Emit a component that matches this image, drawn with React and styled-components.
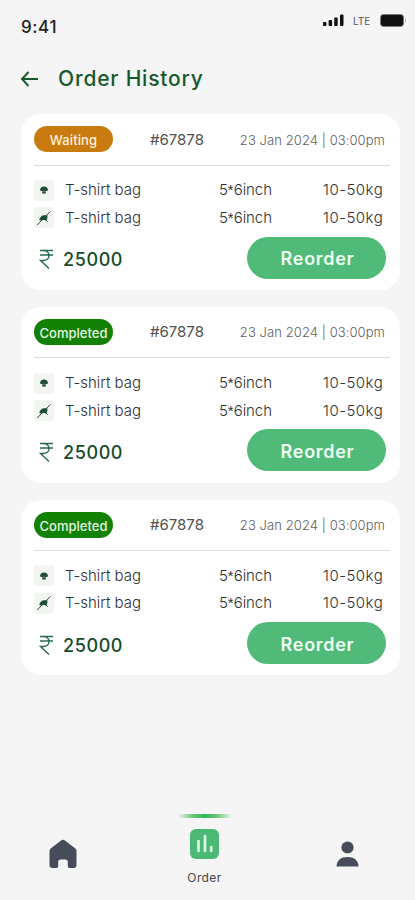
import React from "react";
import styled, { createGlobalStyle } from "styled-components";

const GlobalStyle = createGlobalStyle`
  * { box-sizing: border-box; }
  body { margin: 0; background: #f5f5f5; }
`;

const Screen = styled.div`
  display: flex;
  flex-direction: column;
  width: 415px;
  height: 900px;
  overflow: hidden;
  background: #f5f5f5;
  color: #444;
  font-family: Inter, "Liberation Sans", sans-serif;
  white-space: nowrap;
`;

const StatusBar = styled.header`
  display: flex;
  justify-content: space-between;
  height: 54px;
  padding: 0 8px 0 21px;
`;

const Clock = styled.time`
  padding-top: 17px;
  font-size: 17px;
  line-height: 21px;
  font-weight: 500;
  letter-spacing: 0.6px;
  color: #222;
`;

const StatusIcons = styled.div`
  display: flex;
  align-items: center;
  height: 14px;
  margin-top: 13px;
`;

const Network = styled.span`
  margin: 1px 9px 0 9px;
  width: 18px;
  font-size: 10px;
  line-height: 12px;
  color: #555;
`;

const TitleBar = styled.div`
  display: flex;
  align-items: center;
  height: 50px;
  padding-left: 20px;
`;

const BackButton = styled.button`
  display: flex;
  width: 20px;
  margin-right: 18px;
  padding: 0;
  border: 0;
  background: none;
`;

const Title = styled.h1`
  margin: 0;
  font-size: 21px;
  line-height: 28px;
  font-weight: 500;
  letter-spacing: 0.8px;
  color: #17592b;
`;

const Orders = styled.main`
  display: flex;
  flex-direction: column;
  gap: 17px;
  padding: 10px 15px 0 21px;
`;

const Card = styled.article`
  height: 175.8px;
  padding: 12px 13px 0;
  border-radius: 20px;
  background: #fff;
`;

const CardHeader = styled.div`
  display: grid;
  grid-template-columns: 79px 90px 1fr;
  align-items: center;
  height: 39.500px;
  margin-right: -3px;
  padding-bottom: 12.500px;
  border-bottom: 1px solid #dedede;
`;

const Badge = styled.span`
  display: flex;
  align-items: center;
  justify-content: center;
  height: 26px;
  padding-top: 2px;
  border-radius: 13px;
  font-size: 13px;
  font-weight: 500;
  letter-spacing: ${({ $done }) => ($done ? "0" : "0.1px")};
  color: ${({ $done }) => ($done ? "#e2f4e2" : "#fff0dc")};
  background: ${({ $done }) => ($done ? "#138006" : "#ca7b10")};
`;

const OrderNumber = styled.span`
  padding-left: 37px;
  font-size: 15px;
  color: #505050;
`;

const OrderDate = styled.time`
  justify-self: end;
  margin-right: 5px;
  padding-top: 1px;
  font-size: 13px;
  font-weight: 300;
  letter-spacing: 0.08px;
  color: #606060;
`;

const Items = styled.div`
  display: grid;
  grid-auto-rows: 27.5px;
  padding: 11px 2px 0 0;
`;

const Item = styled.div`
  display: grid;
  grid-template-columns: 31px 154px 1fr 62px;
  align-items: center;
  font-size: 15px;
  font-weight: 300;
  line-height: 20px;
  color: #303030;
`;

const Thumb = styled.span`
  display: flex;
  align-items: center;
  justify-content: center;
  width: 20px;
  height: 21px;
  border-radius: 3px;
  background: #f1f7f0;
`;

const Dimensions = styled.span`
  letter-spacing: -0.05px;
`;

const Times = styled.span`
  font-family: "Liberation Sans", sans-serif;
`;

const Weight = styled.span`
  letter-spacing: 0.5px;
`;

const CardFooter = styled.div`
  display: flex;
  align-items: center;
  justify-content: space-between;
  height: 42px;
  margin-top: 5px;
  padding-right: 1px;
`;

const Price = styled.div`
  display: flex;
  align-items: center;
  gap: 9px;
  padding: 4px 0 0 5px;
  font-size: 18px;
  font-weight: 500;
  letter-spacing: 0.6px;
  color: #174b2b;
`;

const ReorderButton = styled.button`
  width: 139px;
  height: 42px;
  padding: 3px 0 0 2px;
  border: 0;
  border-radius: 21px;
  background: #50bb78;
  color: #f0fff4;
  font: 600 18px/24px Inter, sans-serif;
  letter-spacing: 0.7px;
`;

const Navigation = styled.nav`
  display: grid;
  grid-template-columns: 125px 159px 127px;
  height: 88px;
  margin-top: auto;
`;

const NavItem = styled.a`
  display: flex;
  flex-direction: column;
  align-items: center;
  padding-top: ${({ $top }) => $top}px;
`;

const ActiveLine = styled.span`
  width: 54px;
  height: 4px;
  margin-bottom: 11px;
  border-radius: 2px;
  background: linear-gradient(90deg, transparent, #69c878 28%, #2fb652 50%, #69c878 72%, transparent);
`;

const NavLabel = styled.span`
  margin-top: 11px;
  font-size: 12px;
  line-height: 15px;
  letter-spacing: 0.4px;
  color: #444;
`;

function Signal() {
  return (
    <svg width="21" height="12" viewBox="0 0 21 12" fill="#111">
      <rect x="0" y="8" width="3.5" height="4" rx="1" />
      <rect x="5.6" y="6" width="3.5" height="6" rx="1" />
      <rect x="11.2" y="3.4" width="3.5" height="8.6" rx="1" />
      <rect x="17" y="0.5" width="3.5" height="11.5" rx="1" />
    </svg>
  );
}

function Battery() {
  return (
    <svg width="27" height="13" viewBox="0 0 27 13">
      <rect x="0.5" y="0.5" width="23" height="12" rx="3" fill="#111" stroke="#777" strokeWidth="0.8" />
      <path d="M25 4.5q2 2 0 4z" fill="#aaa" />
    </svg>
  );
}

function BackArrow() {
  return (
    <svg width="20" height="18" viewBox="0 0 20 18" fill="none" stroke="#17592b" strokeWidth="1.9">
      <path d="M18 9H2M8.5 2 2 9l6.5 7" />
    </svg>
  );
}

function Leaf({ crossed }) {
  return crossed ? (
    <svg width="16" height="16" viewBox="0 0 16 16">
      <path d="M3.5 10.5c0-4 3-6 8-5-.3 2 .2 4-1.6 5C7.7 9.6 6 10 3.5 10.5Z" fill="#164d37" />
      <path d="M1.2 15 14.4 1.4" stroke="#34463c" strokeWidth="1" />
      <path d="m9.5 9.6 2 2" stroke="#164d37" />
    </svg>
  ) : (
    <svg width="12" height="10" viewBox="0 0 12 10">
      <path d="M2 5.4C2 3 3.6 1.5 6 1.5S10 3 10 5.4L7.5 6.2 8 8.5H4L4.5 6.2Z" fill="#204b38" />
      <path d="m4.8 6.7 1.2-.8 1.2.8" fill="none" stroke="#cfe1d3" strokeWidth="0.5" />
    </svg>
  );
}

function Rupee() {
  return (
    <svg width="15" height="21" viewBox="0 0 15 21" fill="none" stroke="#28694a" strokeWidth="1.4">
      <path d="M1 1.5h13M1 6h13M4 1.5c8 0 8 10 0 10H1.5l8.5 8" />
    </svg>
  );
}

function Home() {
  return (
    <svg width="28" height="30" viewBox="0 0 28 30">
      <path d="M12 1.5q2-1.6 4 0l10 7.8q1.5 1.2 1.5 3V26q0 3-3 3h-4q-1.7 0-1.7-1.7V23q0-2.500-2.500-2.500h-4.600q-2.500 0-2.500 2.500v4.300Q9.200 29 7.500 29h-4q-3 0-3-3V12.300q0-1.800 1.500-3Z" fill="#474c5a" />
    </svg>
  );
}

function Chart() {
  return (
    <svg width="29" height="30" viewBox="0 0 29 30">
      <rect width="29" height="30" rx="6" fill="#4bb974" />
      <path d="M8.500 12v10M15 7v15M21.200 18v4" stroke="#ddf5e3" strokeWidth="2.7" strokeLinecap="round" />
    </svg>
  );
}

function Profile() {
  return (
    <svg width="23" height="27" viewBox="0 0 23 27" fill="#474c5a">
      <circle cx="11.500" cy="6.500" r="6.100" />
      <path d="M.5 25.500C.8 19 5 16 11.500 16S22.200 19 22.500 25.500Z" />
    </svg>
  );
}

function OrderCard({ done }) {
  return (
    <Card>
      <CardHeader>
        <Badge $done={done}>{done ? "Completed" : "Waiting"}</Badge>
        <OrderNumber>#67878</OrderNumber>
        <OrderDate>23 Jan 2024 | 03:00pm</OrderDate>
      </CardHeader>
      <Items>
        {[false, true].map((crossed) => (
          <Item key={String(crossed)}>
            <Thumb><Leaf crossed={crossed} /></Thumb>
            <span>T-shirt bag</span>
            <Dimensions>5<Times>*</Times>6inch</Dimensions>
            <Weight>10-50kg</Weight>
          </Item>
        ))}
      </Items>
      <CardFooter>
        <Price><Rupee /><span>25000</span></Price>
        <ReorderButton>Reorder</ReorderButton>
      </CardFooter>
    </Card>
  );
}

export default function App() {
  return (
    <Screen>
      <GlobalStyle />
      <StatusBar>
        <Clock>9:41</Clock>
        <StatusIcons><Signal /><Network>LTE</Network><Battery /></StatusIcons>
      </StatusBar>
      <TitleBar>
        <BackButton aria-label="Back"><BackArrow /></BackButton>
        <Title>Order History</Title>
      </TitleBar>
      <Orders>
        <OrderCard />
        <OrderCard done />
        <OrderCard done />
      </Orders>
      <Navigation>
        <NavItem $top={27}><Home /></NavItem>
        <NavItem $top={2}><ActiveLine /><Chart /><NavLabel>Order</NavLabel></NavItem>
        <NavItem $top={29}><Profile /></NavItem>
      </Navigation>
    </Screen>
  );
}
